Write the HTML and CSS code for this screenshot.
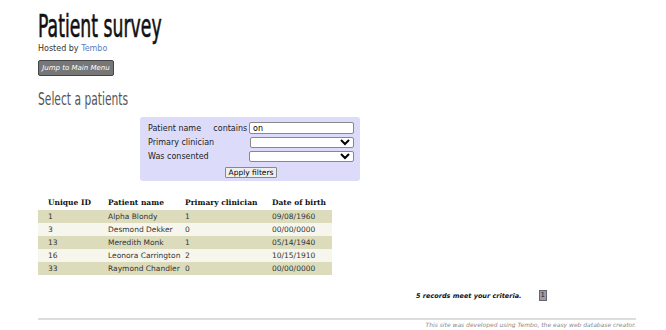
FILE: index.html
```html
<!DOCTYPE html>
<html lang="en">
<head>
    <meta charset="UTF-8">
    <title>Patient survey</title>
    <link rel="stylesheet" href="styles.css">
</head>
<body>
    <div class="page">
        <h1 class="title">Patient survey</h1>
        <div class="hosted">Hosted by <a href="#">Tembo</a></div>
        <button class="menu-btn">Jump to Main Menu</button>
        <h2 class="subtitle">Select a patients</h2>

        <form class="filters">
            <div class="filter-row">
                <span class="label">Patient name</span>
                <span class="op">contains</span>
                <input type="text" class="field" value="on">
            </div>
            <div class="filter-row">
                <span class="label">Primary clinician</span>
                <span class="op"></span>
                <select class="field"><option></option></select>
            </div>
            <div class="filter-row">
                <span class="label">Was consented</span>
                <span class="op"></span>
                <select class="field"><option></option></select>
            </div>
            <div class="filter-submit">
                <button type="button" class="apply">Apply filters</button>
            </div>
        </form>

        <table class="results">
            <thead>
                <tr><th class="c-id">Unique ID</th><th class="c-name">Patient name</th><th class="c-clin">Primary clinician</th><th class="c-dob">Date of birth</th></tr>
            </thead>
            <tbody>
                <tr><td>1</td><td>Alpha Blondy</td><td>1</td><td>09/08/1960</td></tr>
                <tr><td>3</td><td>Desmond Dekker</td><td>0</td><td>00/00/0000</td></tr>
                <tr><td>13</td><td>Meredith Monk</td><td>1</td><td>05/14/1940</td></tr>
                <tr><td>16</td><td>Leonora Carrington</td><td>2</td><td>10/15/1910</td></tr>
                <tr><td>33</td><td>Raymond Chandler</td><td>0</td><td>00/00/0000</td></tr>
            </tbody>
        </table>

        <div class="summary">
            <span class="count">5 records meet your criteria.</span>
            <span class="pager">1</span>
        </div>

        <div class="footer">This site was developed using Tembo, the easy web database creator.</div>
    </div>
</body>
</html>
```

FILE: styles.css
```css
body {
    margin: 0;
    background: #fff;
    font-family: "DejaVu Sans", Verdana, sans-serif;
    color: #222;
}
.page {
    width: 598px;
    padding: 0 0 0 38px;
}
.title {
    margin: 0;
    padding-top: 11px;
    font-family: "Liberation Sans Narrow", "DejaVu Sans Condensed", sans-serif;
    font-weight: normal;
    font-size: 32px;
    line-height: 31px;
    color: #111;
    transform: scaleX(0.6);
    transform-origin: left;
    white-space: nowrap;
    -webkit-text-stroke: 0.6px #111;
}
.hosted {
    font-size: 8px;
    margin-top: 2px;
    color: #333;
}
.hosted a {
    color: #5a7fc0;
    text-decoration: none;
}
.menu-btn {
    display: block;
    margin-top: 7px;
    height: 16px;
    width: 76px;
    padding: 0;
    background: #777;
    border: 1px solid #444;
    border-radius: 2px;
    color: #fff;
    font-family: "DejaVu Sans", sans-serif;
    font-style: italic;
    font-size: 7px;
}
.subtitle {
    margin: 14px 0 0;
    font-family: "Liberation Sans Narrow", "DejaVu Sans Condensed", sans-serif;
    font-weight: normal;
    font-size: 17px;
    line-height: 18px;
    color: #555;
    transform: scaleX(0.7);
    transform-origin: left;
    white-space: nowrap;
}
.filters {
    margin: 9px 0 0 102px;
    width: 206px;
    padding: 4px 6px 3px 8px;
    background: #dcdcfa;
    border-radius: 3px;
}
.filter-row {
    display: flex;
    align-items: center;
    height: 14px;
    font-size: 8px;
    white-space: nowrap;
}
.filter-row .label {
    width: 66px;
}
.filter-row .op {
    width: 36px;
}
.field {
    width: 105px;
    height: 12px;
    box-sizing: border-box;
    margin: 0;
    padding: 0 3px;
    font-size: 8px;
    font-family: "DejaVu Sans", sans-serif;
    border: 1px solid #888;
    border-radius: 2px;
    background: #fff;
}
select.field {
    height: 11px;
}
.filter-submit {
    display: flex;
    justify-content: center;
    margin-top: 4px;
}
.apply {
    height: 11px;
    padding: 0 3px;
    font-size: 7.5px;
    font-family: "DejaVu Sans", sans-serif;
    background: #eee;
    border: 1px solid #888;
    border-radius: 1px;
    line-height: 9px;
}
.results {
    margin-top: 15px;
    border-collapse: collapse;
    table-layout: fixed;
    width: 294px;
    font-size: 7.5px;
    white-space: nowrap;
}
.results th {
    text-align: left;
    font-family: "DejaVu Serif", Georgia, serif;
    font-size: 7.5px;
    font-weight: bold;
    padding: 0 0 1px 10px;
    height: 13px;
    color: #111;
}
.results .c-id {
    width: 50px;
}
.results .c-name {
    width: 67px;
}
.results .c-clin {
    width: 77px;
}
.results .c-dob {
    width: 60px;
}
.results td {
    height: 13px;
    padding: 0 0 0 10px;
    color: #333;
}
.results tbody tr:nth-child(odd) {
    background: #dcdcbc;
}
.results tbody tr:nth-child(even) {
    background: #f6f6ec;
}
.summary {
    margin-top: 15px;
    padding-left: 378px;
    display: flex;
    align-items: center;
    font-size: 6.5px;
}
.count {
    font-weight: bold;
    font-style: italic;
    color: #111;
}
.pager {
    margin-left: 17px;
    padding: 1px 1px;
    background: #9a9ab0;
    border: 1px solid #666;
    font-size: 7px;
    line-height: 7px;
}
.footer {
    margin-top: 17px;
    border-top: 2px solid #ddd;
    text-align: right;
    font-size: 6px;
    font-style: italic;
    color: #888;
    padding-top: 1px;
}
```
